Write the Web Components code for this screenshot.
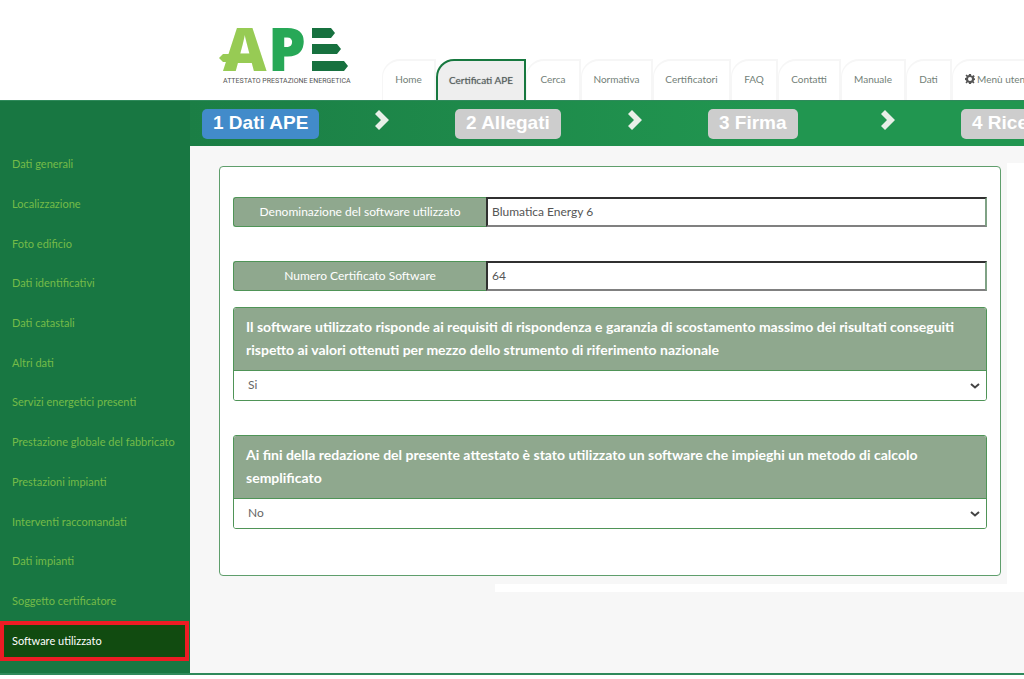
<!DOCTYPE html>
<html lang="it">
<head>
<meta charset="utf-8">
<title>APE - Software utilizzato</title>
<style>
  body { margin: 0; background: #fff; font-family: Lato, "Open Sans", sans-serif; }
</style>
</head>
<body>
<ape-app>
  <ape-header slot="header">
    <ape-tab>Home</ape-tab>
    <ape-tab active>Certificati APE</ape-tab>
    <ape-tab>Cerca</ape-tab>
    <ape-tab>Normativa</ape-tab>
    <ape-tab>Certificatori</ape-tab>
    <ape-tab>FAQ</ape-tab>
    <ape-tab>Contatti</ape-tab>
    <ape-tab>Manuale</ape-tab>
    <ape-tab>Dati</ape-tab>
    <ape-tab gear>Menù utente</ape-tab>
  </ape-header>
  <ape-sidebar slot="side">
    <ape-side-item>Dati generali</ape-side-item>
    <ape-side-item>Localizzazione</ape-side-item>
    <ape-side-item>Foto edificio</ape-side-item>
    <ape-side-item>Dati identificativi</ape-side-item>
    <ape-side-item>Dati catastali</ape-side-item>
    <ape-side-item>Altri dati</ape-side-item>
    <ape-side-item>Servizi energetici presenti</ape-side-item>
    <ape-side-item>Prestazione globale del fabbricato</ape-side-item>
    <ape-side-item>Prestazioni impianti</ape-side-item>
    <ape-side-item>Interventi raccomandati</ape-side-item>
    <ape-side-item>Dati impianti</ape-side-item>
    <ape-side-item>Soggetto certificatore</ape-side-item>
    <ape-side-item active>Software utilizzato</ape-side-item>
  </ape-sidebar>
  <ape-steps slot="steps">
    <ape-step active>1 Dati APE</ape-step>
    <ape-step>2 Allegati</ape-step>
    <ape-step>3 Firma</ape-step>
    <ape-step>4 Ricevuta</ape-step>
  </ape-steps>
  <ape-card>
    <ape-field label="Denominazione del software utilizzato" value="Blumatica Energy 6"></ape-field>
    <ape-field label="Numero Certificato Software" value="64"></ape-field>
    <ape-question value="Si" other="No">Il software utilizzato risponde ai requisiti di rispondenza e garanzia di scostamento massimo dei risultati conseguiti rispetto ai valori ottenuti per mezzo dello strumento di riferimento nazionale</ape-question>
    <ape-question value="No" other="Si">Ai fini della redazione del presente attestato è stato utilizzato un software che impieghi un metodo di calcolo semplificato</ape-question>
  </ape-card>
</ape-app>

<script>
const define = (name, html, setup) => {
  const template = document.createElement('template');
  template.innerHTML = '<style>*{box-sizing:border-box}</style>' + html;
  customElements.define(name, class extends HTMLElement {
    constructor() {
      super();
      this.attachShadow({ mode: 'open' }).append(template.content.cloneNode(true));
    }
    connectedCallback() { if (setup) setup(this, this.shadowRoot); }
  });
};

define('ape-app', `
  <style>
    :host { display: block; overflow: hidden; }
    .body { display: grid; grid-template-columns: 190px minmax(0, 1fr); border-bottom: 2px solid #2f8a5b; }
    main { display: flex; flex-direction: column; background: #f7f7f7; }
    .stage { display: grid; grid-template-columns: minmax(0, 1fr) 17px; }
    .content { padding: 20px 6px 8px 29px; }
    .edge { margin-top: 17px; background: #fff; }
    .foot { height: 8px; margin-left: 305px; background: #fff; }
  </style>
  <slot name="header"></slot>
  <div class="body">
    <slot name="side"></slot>
    <main>
      <slot name="steps"></slot>
      <div class="stage"><div class="content"><slot></slot></div><div class="edge"></div></div>
      <div class="foot"></div>
    </main>
  </div>`);

define('ape-logo', `
  <style>
    :host { display: block; width: 134px; height: 62px; }
    svg { display: block; overflow: visible; }
    text { font-family: "Open Sans", sans-serif; font-weight: 800; font-size: 60px; }
    .tag { font-family: Roboto, sans-serif; font-size: 7px; font-weight: 400; fill: #555; }
  </style>
  <svg width="134" height="62" viewBox="0 0 134 62" role="img" aria-label="APE">
    <text x="4" y="45" fill="#97cb54">A</text>
    <path d="M4 28h38v8H4l-4-4z" fill="#97cb54"/>
    <text x="49" y="45" fill="#27a857">P</text>
    <path d="M93 2h19l4 5-4 5H93zM93 18h25l4 5-4 5H93zM93 35h32l4 5-4 5H93z" fill="#17713f"/>
    <text class="tag" x="4" y="57">ATTESTATO PRESTAZIONE ENERGETICA</text>
  </svg>`);

define('ape-header', `
  <style>
    :host { display: block; border-bottom: 1px solid #2f8a5b; }
    header { display: flex; height: 100px; align-items: flex-end; }
    ape-logo { flex: none; margin: 0 29px 12px 219px; }
    nav { flex: 1; display: grid; grid-template-columns: 54px 90px 55px 72px 78px 47px 63px 65px 46px 96px; height: 41px; min-width: 0; }
  </style>
  <header><ape-logo></ape-logo><nav><slot></slot></nav></header>`);

define('ape-tab', `
  <style>
    :host { display: block; font-size: 10px; }
    a { display: flex; height: 100%; align-items: center; justify-content: center; gap: 2px; padding-bottom: 4px;
        border: 2px solid #f6f6f6; border-bottom: 0; border-left-width: 1px; border-radius: 18px 0 0 0;
        color: #737f78; text-decoration: none; white-space: nowrap; }
    :host([active]) a { border: 2px solid #17783f; border-bottom: 0; background: #eee; color: #555f58; text-shadow: 0 0 1px #99a; padding-bottom: 2px; }
    svg { display: none; }
    :host([gear]) svg { display: block; }
  </style>
  <a href="#"><svg width="10" height="10" viewBox="0 0 20 20" aria-hidden="true"><path fill="#555" fill-rule="evenodd" d="M8 0h4l.5 3 2 .8L17 2l2.500 2.500-1.800 2.500.8 1.500L20 9v3l-2 .5-.8 2L19 17l-2 2-2.500-1.800-2 .8L12 20H8l-.5-2.500-2-.8L3 19l-2-2 1.800-2.500-.8-2L0 12V8l2.500-.5.8-2L1 3l2-2 2.500 1.800 2-.8zM10 6a4 4 0 100 8 4 4 0 000-8z"/></svg><span><slot></slot></span></a>`);

define('ape-sidebar', `
  <style>
    :host { display: block; background: #187742; padding: 44px 0 12px; }
    nav { display: flex; flex-direction: column; height: 516px; }
  </style>
  <nav aria-label="Sezioni"><slot></slot></nav>`);

define('ape-side-item', `
  <style>
    :host { display: block; flex: 1; font-size: 11px; }
    a { display: flex; height: 100%; align-items: center; padding: 0 0 2px 12px; color: #75bb48; text-decoration: none; white-space: nowrap; }
    :host([active]) a { background: #114b10; color: #fff; border: 4px solid #ec1c24; padding-left: 8px; margin-right: 1px; }
  </style>
  <a href="#"><slot></slot></a>`);

define('ape-steps', `
  <style>
    :host { display: block; background: linear-gradient(90deg, #1b7e45, #219650 70%, #219650); }
    div { display: grid; grid-template-columns: repeat(4, 253px); height: 45px; align-items: center; padding-left: 12px; }
  </style>
  <div><slot></slot></div>`);

define('ape-step', `
  <style>
    :host { display: grid; grid-template-columns: 172px 1fr; align-items: center; }
    button { justify-self: start; height: 30px; border: 0; border-radius: 5px; padding: 0 11px 2px; background: #cdcdcd; color: #fff;
             font: bold 19px "Liberation Sans", Arial, sans-serif; white-space: nowrap; }
    :host([active]) button { background: #428bca; }
    svg { margin-bottom: 8px; }
    :host(:last-child) svg { display: none; }
  </style>
  <button type="button"><slot></slot></button>
  <svg width="16" height="20" viewBox="0 0 16 20" aria-hidden="true"><path fill="#e8efe8" d="M5 0l10 10L5 20l-4-4 6-6-6-6z"/></svg>`);

define('ape-card', `
  <style>
    :host { display: block; }
    form { display: flex; flex-direction: column; gap: 34px; min-height: 410px; padding: 30px 13px;
           border: 1px solid #5f9e6c; border-radius: 4px; background: #fff; }
    ::slotted(ape-question:nth-of-type(1)) { margin-top: -18px; }
  </style>
  <form><slot></slot></form>`);

define('ape-field', `
  <style>
    :host { display: grid; grid-template-columns: 253px minmax(0, 1fr); height: 30px; }
    label { display: flex; align-items: center; justify-content: center; padding-bottom: 2px; background: #8fa88e; color: #fff;
            border: 1px solid #4f9457; border-right: 0; border-radius: 3px 0 0 3px; font-size: 12px; }
    input { width: 100%; border: 2px solid #808080; border-top-color: #303030; border-left-color: #303030; border-right-color: #7fa285;
            border-radius: 0; padding: 0 4px 2px; background: #fff; color: #555; font: 12px Lato, sans-serif; outline: 0; }
  </style>
  <label for="f"></label><input id="f" type="text">`,
  (host, root) => {
    root.querySelector('label').textContent = host.getAttribute('label');
    root.querySelector('input').value = host.getAttribute('value');
  });

define('ape-question', `
  <style>
    :host { display: block; border: 1px solid #4f9457; border-radius: 3px; overflow: hidden; }
    label { display: block; padding: 7px 12px 9px; background: #8fa88e; color: #fff; border-bottom: 1px solid #4f9457;
            font-size: 14px; font-weight: 700; line-height: 23px; }
    .pick { display: grid; align-items: center; }
    select, svg { grid-area: 1 / 1; }
    select { appearance: none; width: 100%; height: 29px; border: 0; padding: 0 14px 2px; background: #fff; color: #666; font: 12px Lato, sans-serif; outline: 0; }
    svg { justify-self: end; margin-right: 6px; pointer-events: none; }
  </style>
  <label for="s"><slot></slot></label>
  <div class="pick"><select id="s"></select>
  <svg width="10" height="6" viewBox="0 0 10 6" aria-hidden="true"><path d="M1 1l4 3.500L9 1" fill="none" stroke="#444" stroke-width="2"/></svg></div>`,
  (host, root) => {
    const select = root.querySelector('select');
    if (!select.length) select.append(new Option(host.getAttribute('value')), new Option(host.getAttribute('other')));
  });
</script>
</body>
</html>
